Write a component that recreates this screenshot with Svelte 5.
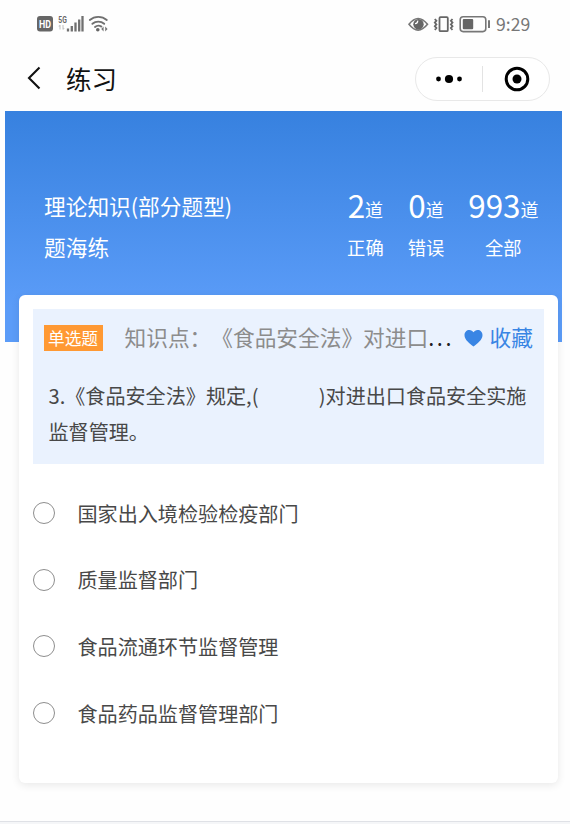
<script lang="ts">
  const stats = [
    { value: 2, label: '正确' },
    { value: 0, label: '错误' },
    { value: 993, label: '全部' }
  ];

  const options = [
    '国家出入境检验检疫部门',
    '质量监督部门',
    '食品流通环节监督管理',
    '食品药品监督管理部门'
  ];

  let selected = $state(-1);
</script>

<div class="page">
  <header class="status-bar">
    <div class="status-left">
      <svg width="72" height="22" viewBox="0 0 72 22" aria-hidden="true">
        <rect x="0" y="5" width="16" height="15.5" rx="3" fill="#666" />
        <text x="2" y="16.7" font-size="11.5" font-weight="700" textLength="12" lengthAdjust="spacingAndGlyphs" fill="#fff">HD</text>
        <text x="21.3" y="12" font-size="9.8" font-weight="700" textLength="8.5" lengthAdjust="spacingAndGlyphs" fill="#666">5G</text>
        <path d="M23 14v4.5m-1.2-3L23 14M26 14v4.5m1.2-1.5L26 18.5" stroke="#c8c8c8" stroke-width="1.2" fill="none" />
        <path d="M31 17.5V20.5M34.8 15v5.5M38.5 11.5v9M42.2 8.5v12M45.5 5v15.5" stroke="#707070" stroke-width="2.3" />
        <g fill="none" stroke="#707070" stroke-width="1.9" stroke-linecap="round">
          <path d="M52.8 9a13 13 0 0 1 17 0" />
          <path d="M55.4 12.8a9 9 0 0 1 11.8 0" />
          <path d="M58 16a5.4 5.4 0 0 1 6.4-.4" />
        </g>
        <circle cx="60.8" cy="18.7" r="1.8" fill="#666" />
        <path d="M66.6 15.5v5l-2.4-2.5zM68.2 15.5v5l2.4-2.5z" fill="#777" />
      </svg>
    </div>
    <div class="status-right">
      <svg width="83" height="20" viewBox="0 0 83 20" aria-hidden="true">
        <path d="M1 10.3Q10 -1.4 19.5 10.3Q10 22 1 10.3Z" fill="none" stroke="#777" stroke-width="1.6" />
        <circle cx="10.5" cy="10.2" r="5.2" fill="#666" />
        <path d="M9.6 6.6q.3 2.8-2.6 3" fill="none" stroke="#fff" stroke-width="1.4" />
        <rect x="31.5" y="3.2" width="8.3" height="14" rx="1" fill="none" stroke="#666" stroke-width="1.8" />
        <path d="M26.8 5l1.6 1.8-1.6 1.8 1.6 1.8-1.6 1.8 1.6 1.8-1.6 1.8M44.5 5l-1.6 1.8 1.6 1.8-1.6 1.8 1.6 1.8-1.6 1.8 1.6 1.8" fill="none" stroke="#666" stroke-width="1.8" />
        <rect x="52.2" y="2.8" width="25.6" height="14.8" rx="3" fill="none" stroke="#777" stroke-width="1.6" />
        <rect x="54.8" y="5" width="10.4" height="10.3" rx="1" fill="#666" />
        <path d="M81 6.2v7.8" stroke="#777" stroke-width="2" />
      </svg>
      <span class="clock">9:29</span>
    </div>
  </header>

  <nav class="nav-bar">
    <svg class="back" width="14" height="24" viewBox="0 0 14 24" aria-hidden="true">
      <path d="M12.5 1.5L2 12l10.5 10.5" fill="none" stroke="#111" stroke-width="2.1" />
    </svg>
    <h1>练习</h1>
    <div class="capsule">
      <svg width="28" height="12" viewBox="0 0 28 12" aria-hidden="true">
        <circle cx="3.5" cy="6" r="2.4" />
        <circle cx="14" cy="6" r="4.1" />
        <circle cx="24.5" cy="6" r="2.4" />
      </svg>
      <span class="divider"></span>
      <svg width="26" height="26" viewBox="0 0 26 26" aria-hidden="true">
        <circle cx="13" cy="13" r="10.8" fill="none" stroke="#000" stroke-width="3" />
        <circle cx="13" cy="13" r="4.5" />
      </svg>
    </div>
  </nav>

  <section class="banner">
    <div class="course">
      <div>理论知识(部分题型)</div>
      <div>题海练</div>
    </div>
    <div class="stats">
      {#each stats as stat}
        <div class="stat">
          <div class="count">{stat.value}<small>道</small></div>
          <div class="label">{stat.label}</div>
        </div>
      {/each}
    </div>
  </section>

  <main class="card">
    <section class="question">
      <div class="topic">
        <span class="tag">单选题</span>
        <span class="point">知识点：《食品安全法》对进口<span class="dots">...</span></span>
        <svg width="19" height="18" viewBox="0 0 19 18" aria-hidden="true">
          <path d="M9.5 17.5C6 14.5.5 11 .5 6.2.5 3 2.7 1 5.3 1 7.2 1 8.7 2 9.5 3.3 10.3 2 11.8 1 13.7 1c2.6 0 4.8 2 4.8 5.2 0 4.8-5.5 8.3-9 11.3z" fill="#3985e4" />
        </svg>
        <span class="favorite">收藏</span>
      </div>
      <p>3.《食品安全法》规定,(&#12288;&#12288;&#12288;)对进出口食品安全实施监督管理。</p>
    </section>

    <div class="options">
      {#each options as option, index}
        <button class="option" onclick={() => (selected = index)}>
          <span class="radio" class:checked={selected === index}></span>
          <span>{option}</span>
        </button>
      {/each}
    </div>
  </main>

  <footer></footer>
</div>

<style>
  :global(body) {
    background: #fff;
  }

  .page {
    display: flex;
    flex-direction: column;
    box-sizing: border-box;
    width: 570px;
    height: 824px;
    overflow: hidden;
    background: #fefefe;
    color: #484848;
    font-family: 'Noto Sans CJK SC', sans-serif;
    text-spacing-trim: space-all;
  }

  .status-bar {
    display: flex;
    justify-content: space-between;
    height: 46px;
    padding: 0 40px 0 37px;
    box-sizing: border-box;
  }

  .status-left {
    padding-top: 11px;
  }

  .status-left text {
    font-family: Roboto, sans-serif;
  }

  .status-right {
    display: flex;
    align-items: flex-start;
    gap: 5px;
    padding-top: 13.5px;
  }

  .clock {
    width: 34px;
    color: #777;
    font-size: 17.6px;
    line-height: 20px;
    white-space: nowrap;
  }

  .nav-bar {
    display: flex;
    align-items: center;
    height: 65px;
    padding: 0 20px 0 27px;
    box-sizing: border-box;
  }

  .back {
    margin: -1px 25px 0 0;
  }

  h1 {
    flex: 1;
    margin: -2px 0 0;
    color: #111;
    font-size: 25.5px;
    font-weight: 400;
    line-height: 36px;
  }

  .capsule {
    display: flex;
    align-items: center;
    justify-content: space-between;
    box-sizing: border-box;
    width: 135px;
    height: 44px;
    padding: 0 19px;
    border: 1px solid #e8e8e8;
    border-radius: 22px;
    background: #fff;
  }

  .divider {
    width: 1px;
    height: 26px;
    margin-left: 6px;
    margin-right: 8px;
    background: #e3e3e3;
  }

  .banner {
    display: flex;
    flex: none;
    justify-content: space-between;
    box-sizing: border-box;
    height: 231px;
    margin: 0 8px 0 5px;
    padding: 74px 23.5px 0 39px;
    background: linear-gradient(#3781df, #5b9cf8 85%);
    color: #fff;
  }

  .course {
    font-size: 21.7px;
    line-height: 41px;
  }

  .stats {
    display: flex;
    gap: 24px;
  }

  .stat {
    text-align: center;
  }

  .count {
    height: 43px;
    font-size: 31.4px;
    line-height: 40px;
    white-space: nowrap;
  }

  .count small {
    font-size: 18px;
    line-height: 1;
    vertical-align: 1px;
  }

  .label {
    font-size: 18.3px;
    line-height: 38px;
  }

  .card {
    position: relative;
    flex: none;
    box-sizing: border-box;
    width: 539px;
    height: 488px;
    margin: -47px 0 0 18.5px;
    padding: 14px 14px 0;
    border-radius: 6px;
    background: #fff;
    box-shadow: 0 2px 8px rgba(0, 0, 0, 0.09);
  }

  .question {
    box-sizing: border-box;
    height: 155px;
    padding-top: 11px;
    background: #eaf2fe;
  }

  .topic {
    display: flex;
    align-items: center;
    height: 36px;
    padding-left: 11px;
    font-size: 21.7px;
    line-height: 36px;
    white-space: nowrap;
  }

  .tag {
    width: 59px;
    height: 26px;
    margin-right: 22px;
    background: #ff9933;
    color: #fff;
    font-size: 16.7px;
    line-height: 26px;
    text-align: center;
  }

  .point {
    width: 339px;
    color: #8c8c8c;
  }

  .dots {
    color: #222;
    letter-spacing: 2.6px;
  }

  .favorite {
    margin-left: 7px;
    color: #3985e4;
  }

  .point,
  .favorite {
    margin-top: -2px;
  }

  p {
    margin: 22px 10px 0 16px;
    font-size: 20.1px;
    line-height: 36px;
  }

  .options {
    padding-top: 16px;
  }

  .option {
    display: flex;
    align-items: center;
    gap: 23px;
    width: 100%;
    height: 66.6px;
    padding: 0;
    border: 0;
    background: none;
    color: inherit;
    font: inherit;
    font-size: 20.1px;
  }

  .radio {
    box-sizing: border-box;
    width: 22px;
    height: 22px;
    border: 1px solid #8e8e8e;
    border-radius: 50%;
  }

  .radio.checked {
    border: 6px solid #3985e4;
  }

  footer {
    height: 3px;
    margin-top: auto;
    box-sizing: border-box;
    border-top: 1px solid #dfe1e6;
    background: #f5f6f8;
  }
</style>
